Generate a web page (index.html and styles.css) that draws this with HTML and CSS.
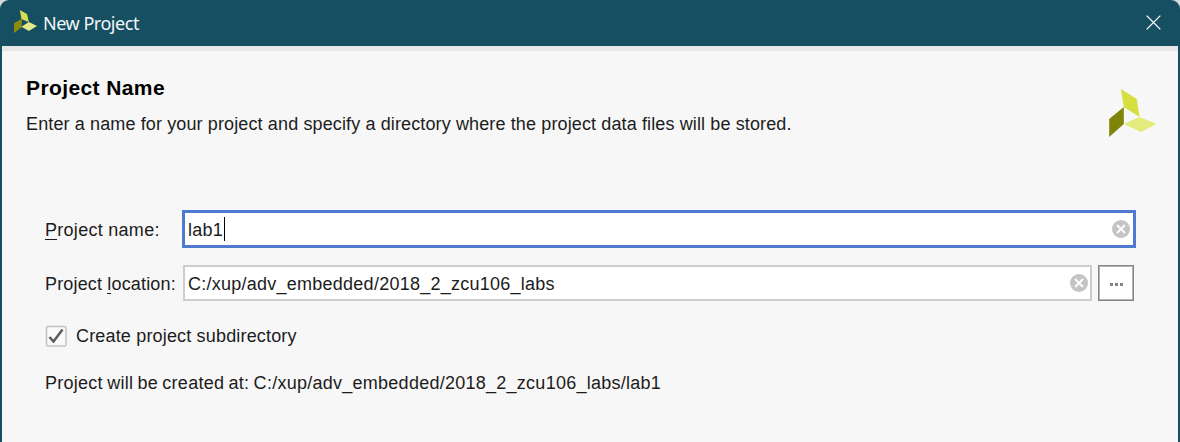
FILE: index.html
```html
<!DOCTYPE html>
<html lang="en">
<head>
<meta charset="utf-8">
<title>New Project</title>
<link rel="stylesheet" href="styles.css">
</head>
<body>
<div class="window">
  <header class="titlebar">
    <svg class="title-logo" viewBox="42 30 71 69" preserveAspectRatio="none"><path fill="#d5df4d" d="M60 30l22 12 6 25-23-10z"/><path fill="#8d8d0c" d="M66 56v26L42 99V70z"/><path fill="#e4eb8c" d="M65 80l23-14 25 12-25 15z"/></svg>
    <span class="title">New Project</span>
    <svg class="close" viewBox="0 0 16 16"><path d="M.7.7l14.6 14.6M15.3.7L.7 15.3"/></svg>
  </header>
  <main class="content">
    <section class="intro">
      <div>
        <h1>Project Name</h1>
        <p class="description">Enter a name for your project and specify a directory where the project data files will be stored.</p>
      </div>
      <svg class="logo" viewBox="57 28 143 144"><path fill="#d5df3d" d="M92 28l48 30 8 54-47-30z"/><path fill="#7f8509" d="M101 82v51l-44 39v-54z"/><path fill="#e4eb7c" d="M101 133l47-21 52 21-48 24z"/></svg>
    </section>
    <section class="form">
      <div class="row name-row">
        <label class="name-label"><span class="key">P</span>roject name:</label>
        <div class="field focused"><span class="name">lab1</span><i class="caret"></i>
          <svg class="clear" viewBox="0 0 18 18"><circle cx="9" cy="9" r="9"/><path d="M5 5l8 8M13 5l-8 8"/></svg>
        </div>
      </div>
      <div class="row location-row">
        <label class="location-label">Project <span class="key">l</span>ocation:</label>
        <div class="field"><span class="path">C:/xup/adv_embedded/2018_2_zcu106_labs</span>
          <svg class="clear" viewBox="0 0 18 18"><circle cx="9" cy="9" r="9"/><path d="M5 5l8 8M13 5l-8 8"/></svg>
        </div>
        <button class="browse" aria-label="Browse"><i></i><i></i><i></i></button>
      </div>
      <div class="check-row">
        <svg class="checkbox" viewBox="0 0 22 22"><rect x="1.5" y="1.5" width="19.5" height="19.5" rx="1.5"/><path d="M4.5 12l4 4.5L17.5 4.5"/></svg>
        <span class="check-label">Create project subdirectory</span>
      </div>
      <p class="result">Project will be created at: C:/xup/adv_embedded/2018_2_zcu106_labs/lab1</p>
    </section>
  </main>
</div>
</body>
</html>
```
FILE: styles.css
```css
* { box-sizing: border-box; }
body { margin: 0; background: #d4d8d9; font: 18px/22px "Liberation Sans", Arial, sans-serif; color: #1c1c1c; }
h1, p { margin: 0; white-space: nowrap; }
.window { height: 442px; background: #164f62; border-radius: 9px 9px 0 0; padding: 0 2px; overflow: hidden; }
.titlebar { height: 46px; display: flex; align-items: center; padding: 0 17px 0 12px; }
.title-logo { width: 23px; height: 23px; margin-top: -3px; }
.title { margin-left: 6px; margin-top: -1px; color: #f2f7f8; font: 18px/24px "Noto Sans", sans-serif; white-space: nowrap; letter-spacing: -.47px; }
.close { width: 15px; height: 15px; margin-left: auto; margin-top: -1px; fill: none; stroke: #fff; stroke-width: 1.4; }
.content { height: 396px; background: #f7f7f7; border-top: 5px solid #e7e7e7; }
.intro { display: flex; justify-content: space-between; padding: 26px 21px 0 24px; height: 159px; }
h1 { font-size: 21px; line-height: 22px; letter-spacing: .4px; color: #000; }
.description { margin-top: 14px; letter-spacing: .125px; }
.logo { width: 48px; height: 48px; margin-top: 12px; }
.form { padding-left: 43px; padding-right: 42px; }
.row { display: flex; align-items: center; }
.row label { width: 137px; white-space: nowrap; padding-top: 2px; }
.name-label { letter-spacing: .28px; }
.location-label { letter-spacing: .16px; }
.key { border-bottom: 1px solid #1c1c1c; display: inline-block; line-height: 18px; }
.name-row { height: 38px; }
.location-row { height: 36px; margin-top: 17px; }
.field { flex: 1; height: 36px; display: flex; align-items: center; background: #fff; border: 2px solid #cdcdcd; padding: 0 2px 0 3px; margin-left: 1px; white-space: nowrap; }
.field.focused { height: 38px; border: 3px solid #4e7bd1; padding: 0 3px; margin-left: 0; }
.name, .path { padding-top: 2px; letter-spacing: .25px; }
.caret { width: 1px; height: 24px; background: #000; margin-left: 1px; }
.clear { width: 18px; height: 18px; margin-left: auto; fill: #c2c4c6; }
.clear path { fill: none; stroke: #fff; stroke-width: 2; }
.browse { width: 36px; height: 36px; margin: 0 2px 0 6px; padding: 2px 0 0; display: flex; align-items: center; justify-content: center; gap: 2px; background: #fff; border: 1px solid #848484; box-shadow: inset 0 0 0 1px #b5b5b5; }
.browse i { width: 3px; height: 3px; background: #85857b; }
.check-row { display: flex; align-items: center; height: 24px; margin-top: 23px; }
.checkbox { width: 22px; height: 22px; fill: #fafafa; stroke: #c2c2c2; stroke-width: 1.5; }
.checkbox path { fill: none; stroke: #5d5d5d; stroke-width: 2.5; }
.check-label { margin-left: 9px; letter-spacing: .17px; }
.result { margin-top: 24px; letter-spacing: .26px; word-spacing: -.95px; }
```
